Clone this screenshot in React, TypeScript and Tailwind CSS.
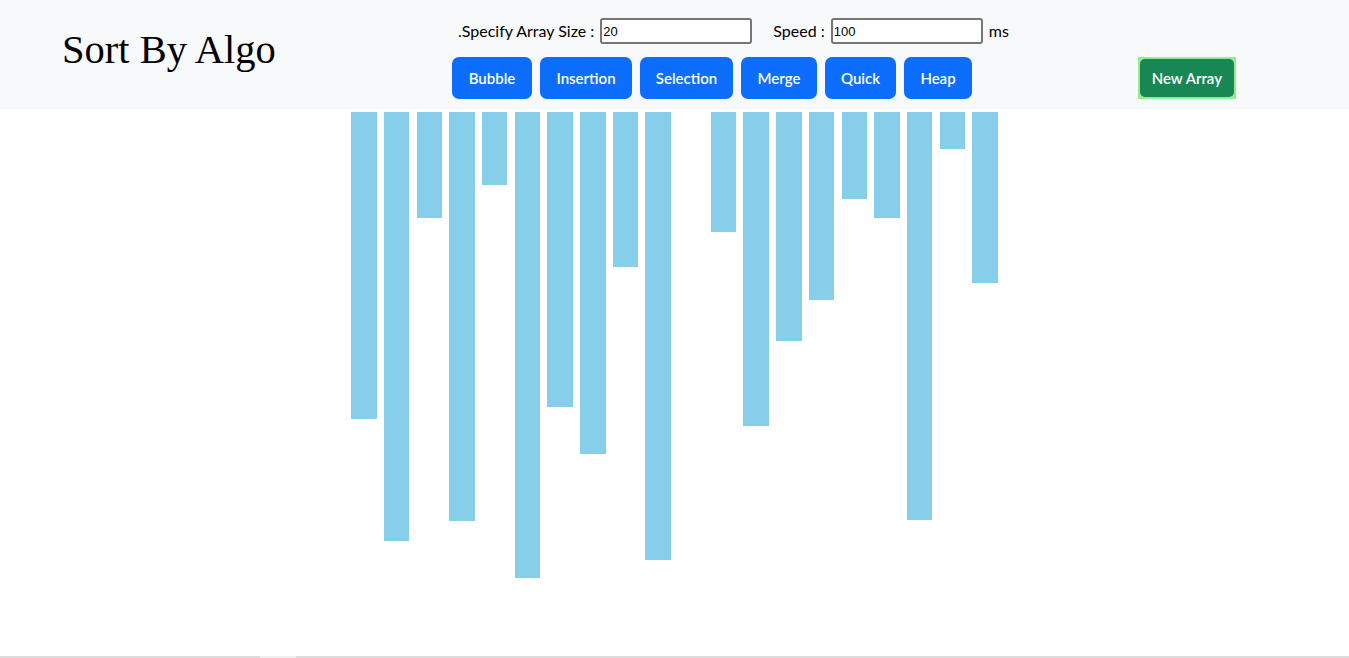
const ALGOS = [
  { label: 'Bubble', width: 'w-[80px]' },
  { label: 'Insertion', width: 'w-[92px]' },
  { label: 'Selection', width: 'w-[93px]' },
  { label: 'Merge', width: 'w-[76px]' },
  { label: 'Quick', width: 'w-[71px]' },
  { label: 'Heap', width: 'w-[68px]' },
];

const HEIGHTS = [307, 429, 106, 409, 73, 466, 295, 342, 155, 448, 0, 120, 314, 229, 188, 87, 106, 408, 37, 171];

export default function App() {
  return (
    <div className="min-h-[658px] bg-white font-['Lato',sans-serif] text-black">
      <header className="flex h-[109px] items-start bg-[#f8f9fa]">
        <h1 className="ml-[62px] mt-[27px] w-[390px] font-['Liberation_Serif',serif] text-[40.5px] leading-[46px]">
          Sort By Algo
        </h1>
        <div className="flex flex-col">
          <div className="mt-[18px] ml-[6px] flex h-[26px] items-center text-[16px]">
            <span>.Specify Array Size :</span>
            <input
              className="ml-[6px] h-[26px] w-[152px] rounded-[3px] border-2 border-[#767676] bg-white px-[1px] font-['Liberation_Sans',sans-serif] text-[13px] outline-none"
              defaultValue="20"
              type="text"
            />
            <span className="ml-[21px]">Speed :</span>
            <input
              className="ml-[6px] h-[26px] w-[152px] rounded-[3px] border-2 border-[#767676] bg-white px-[1px] font-['Liberation_Sans',sans-serif] text-[13px] outline-none"
              defaultValue="100"
              type="text"
            />
            <span className="ml-[6px]">ms</span>
          </div>
          <div className="mt-[13px] flex gap-2">
            {ALGOS.map((algo) => (
              <button
                className={`h-[42px] rounded-[7px] bg-[#0d6efd] text-[15px] font-semibold text-white ${algo.width}`}
                key={algo.label}
                type="button"
              >
                {algo.label}
              </button>
            ))}
          </div>
        </div>
        <div className="ml-[129px] mt-[57px] bg-[#90ee90] p-[2px]">
          <button
            className="h-[38px] w-[94px] rounded-[5px] bg-[#198754] text-[15px] font-semibold text-white"
            type="button"
          >
            New Array
          </button>
        </div>
      </header>
      <main className="flex h-[547px] items-start justify-center pt-[3px]">
        {HEIGHTS.map((height, index) => (
          <div
            className="mx-[3.6px] w-[25.5px] bg-[#87ceeb]"
            key={index}
            style={{ height }}
          />
        ))}
      </main>
      <div className="flex h-[2px] bg-[#dcdcdc]">
        <div className="ml-[260px] w-[36px] bg-[#f0f0f0]" />
      </div>
    </div>
  );
}
